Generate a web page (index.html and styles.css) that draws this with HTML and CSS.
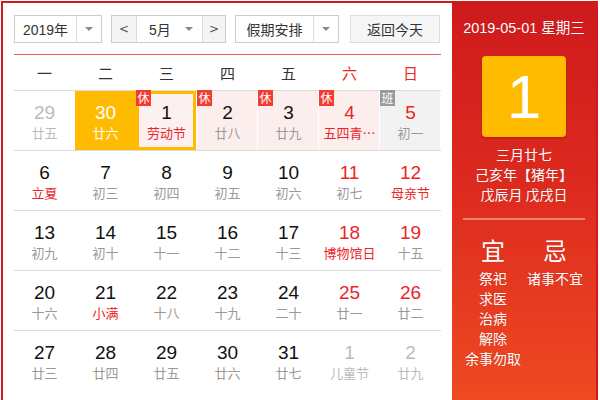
FILE: index.html
```html
<!DOCTYPE html>
<html lang="zh-CN">
<head>
<meta charset="utf-8">
<title>万年历</title>
<link rel="stylesheet" href="styles.css">
</head>
<body>
<div class="cal">
  <div class="main">
    <div class="controls">
      <div class="sel sel-year"><span class="sel-text">2019年</span><span class="sel-arrow"><i class="tri"></i></span></div>
      <div class="month-group">
        <span class="nav">&lt;</span>
        <span class="month"><span class="month-text">5月</span><i class="tri"></i></span>
        <span class="nav nav-next">&gt;</span>
      </div>
      <div class="sel sel-holiday"><span class="sel-text">假期安排</span><span class="sel-arrow"><i class="tri"></i></span></div>
      <div class="btn-today">返回今天</div>
    </div>
    <div class="week">
      <span>一</span><span>二</span><span>三</span><span>四</span><span>五</span><span class="red">六</span><span class="red">日</span>
    </div>
    <div class="grid">
      <div class="cell other"><b>29</b><em>廿五</em></div>
      <div class="cell selected"><b>30</b><em>廿六</em></div>
      <div class="cell holiday today"><span class="frame"></span><span class="badge">休</span><b>1</b><em class="red">劳动节</em></div>
      <div class="cell holiday"><span class="badge">休</span><b>2</b><em>廿八</em></div>
      <div class="cell holiday"><span class="badge">休</span><b>3</b><em>廿九</em></div>
      <div class="cell holiday"><span class="badge">休</span><b class="red">4</b><em class="red">五四青…</em></div>
      <div class="cell work"><span class="badge badge-work">班</span><b class="red">5</b><em>初一</em></div>

      <div class="cell"><b>6</b><em class="red">立夏</em></div>
      <div class="cell"><b>7</b><em>初三</em></div>
      <div class="cell"><b>8</b><em>初四</em></div>
      <div class="cell"><b>9</b><em>初五</em></div>
      <div class="cell"><b>10</b><em>初六</em></div>
      <div class="cell"><b class="red">11</b><em>初七</em></div>
      <div class="cell"><b class="red">12</b><em class="red">母亲节</em></div>

      <div class="cell"><b>13</b><em>初九</em></div>
      <div class="cell"><b>14</b><em>初十</em></div>
      <div class="cell"><b>15</b><em>十一</em></div>
      <div class="cell"><b>16</b><em>十二</em></div>
      <div class="cell"><b>17</b><em>十三</em></div>
      <div class="cell"><b class="red">18</b><em class="red">博物馆日</em></div>
      <div class="cell"><b class="red">19</b><em>十五</em></div>

      <div class="cell"><b>20</b><em>十六</em></div>
      <div class="cell"><b>21</b><em class="red">小满</em></div>
      <div class="cell"><b>22</b><em>十八</em></div>
      <div class="cell"><b>23</b><em>十九</em></div>
      <div class="cell"><b>24</b><em>二十</em></div>
      <div class="cell"><b class="red">25</b><em>廿一</em></div>
      <div class="cell"><b class="red">26</b><em>廿二</em></div>

      <div class="cell"><b>27</b><em>廿三</em></div>
      <div class="cell"><b>28</b><em>廿四</em></div>
      <div class="cell"><b>29</b><em>廿五</em></div>
      <div class="cell"><b>30</b><em>廿六</em></div>
      <div class="cell"><b>31</b><em>廿七</em></div>
      <div class="cell other"><b>1</b><em>儿童节</em></div>
      <div class="cell other"><b>2</b><em>廿九</em></div>
    </div>
  </div>
  <div class="side">
    <div class="side-date">2019-05-01 星期三</div>
    <div class="side-day">1</div>
    <div class="side-lunar">三月廿七</div>
    <div class="side-lunar">己亥年【猪年】</div>
    <div class="side-lunar">戊辰月 戊戌日</div>
    <div class="side-line"></div>
    <div class="yiji">
      <div class="yj-col">
        <div class="yj-title">宜</div>
        <div class="yj-item">祭祀</div>
        <div class="yj-item">求医</div>
        <div class="yj-item">治病</div>
        <div class="yj-item">解除</div>
        <div class="yj-item">余事勿取</div>
      </div>
      <div class="yj-col">
        <div class="yj-title">忌</div>
        <div class="yj-item">诸事不宜</div>
      </div>
    </div>
  </div>
</div>
</body>
</html>
```

FILE: styles.css
```css
* { box-sizing: border-box; }
html, body { margin: 0; padding: 0; background: #fff; }
body {
  font-family: "Liberation Sans", "Noto Sans CJK SC", sans-serif;
  color: #333;
}
.cal {
  margin: 1px 0 0 1px;
  width: 597px;
  height: 410px;
  border: 2px solid #d3181c;
  display: flex;
}
.main {
  width: 449px;
  padding: 12px 0 0 11px;
}
.controls {
  display: flex;
  align-items: stretch;
  height: 28px;
  font-family: "Noto Sans CJK SC", sans-serif;
  font-size: 14px;
  color: #333;
}
.sel {
  display: flex;
  border: 1px solid #ccc;
  background: #fff;
}
.sel-text {
  display: flex;
  align-items: center;
  justify-content: center;
  border-right: 1px solid #ddd;
}
.sel-arrow {
  display: flex;
  align-items: center;
  justify-content: center;
}
.tri {
  display: block;
  width: 0;
  height: 0;
  border-left: 4px solid transparent;
  border-right: 4px solid transparent;
  border-top: 4px solid #888;
}
.sel-year { width: 88px; }
.sel-year .sel-text { width: 62px; font-family: "Liberation Sans", "Noto Sans CJK SC", sans-serif; font-size: 14px; }
.sel-year .sel-arrow { flex: 1; }
.month-group {
  margin-left: 9px;
  width: 115px;
  display: flex;
  border: 1px solid #ccc;
}
.nav {
  width: 25px;
  display: flex;
  align-items: center;
  justify-content: center;
  background: #f4f4f4;
  border-right: 1px solid #ddd;
  font-family: "DejaVu Sans", sans-serif;
  font-size: 12px;
  color: #555;
}
.nav-next {
  width: 23px;
  border-right: 0;
  border-left: 1px solid #ddd;
}
.month {
  flex: 1;
  display: flex;
  align-items: center;
  justify-content: space-between;
  padding: 0 9px 0 12px;
}
.month-text { font-family: "Liberation Sans", "Noto Sans CJK SC", sans-serif; }
.sel-holiday { margin-left: 9px; width: 104px; }
.sel-holiday .sel-text { width: 78px; }
.sel-holiday .sel-arrow { flex: 1; }
.btn-today {
  margin-left: 11px;
  width: 90px;
  display: flex;
  align-items: center;
  justify-content: center;
  background: #f6f6f6;
  border: 1px solid #ddd;
}
.week {
  margin-top: 11px;
  width: 427px;
  height: 36px;
  border-top: 1px solid #f25a5a;
  display: grid;
  grid-template-columns: repeat(7, 61px);
  align-items: center;
  font-family: "Noto Sans CJK SC", sans-serif;
  font-size: 15px;
  color: #333;
}
.week span { text-align: center; line-height: 34px; }
.red { color: #ec2528 !important; }
.grid {
  width: 427px;
  display: grid;
  grid-template-columns: repeat(7, 61px);
  grid-auto-rows: 60px;
}
.cell {
  position: relative;
  border-top: 1px solid #dcdcdc;
  display: flex;
  flex-direction: column;
  align-items: center;
  padding-top: 11px;
}
.cell b {
  position: relative;
  font-weight: normal;
  font-family: "Liberation Sans", sans-serif;
  font-size: 19px;
  line-height: 22px;
  color: #111;
}
.cell em {
  position: relative;
  font-style: normal;
  font-family: "Noto Sans CJK SC", sans-serif;
  font-size: 13px;
  line-height: 18px;
  color: #999;
  white-space: nowrap;
}
.cell.other b, .cell.other em { color: #bbb; }
.cell.selected { background: #ffbb00; }
.cell.selected b, .cell.selected em { color: #fff; }
.cell.holiday::before,
.cell.work::before {
  content: "";
  position: absolute;
  top: 0; bottom: 0; left: 0; right: 1px;
  background: #fdeeee;
}
.cell.work::before { background: #f2f2f2; }
.frame {
  position: absolute;
  top: 0; bottom: 0; left: 0; right: 1px;
  border: 3px solid #ffbb00;
  background: #fdf0f0;
}
.badge {
  position: absolute;
  top: -1px;
  left: 0;
  width: 15px;
  height: 16px;
  background: #f43b2f;
  color: #fff;
  font-family: "Noto Sans CJK SC", sans-serif;
  font-size: 12px;
  line-height: 16px;
  text-align: center;
  z-index: 2;
}
.badge-work { background: #9a9a9a; }
.side {
  width: 144px;
  background: linear-gradient(180deg, #cf1a1c 0%, #dd2a1f 45%, #ef4b22 100%);
  display: flex;
  flex-direction: column;
  align-items: center;
  padding-top: 15px;
  color: #fff;
  font-family: "Noto Sans CJK SC", sans-serif;
  text-shadow: 0 0 1px rgba(120, 0, 0, 0.35);
}
.side-date {
  font-family: "Liberation Sans", "Noto Sans CJK SC", sans-serif;
  font-size: 14.5px;
  line-height: 20px;
}
.side-day {
  margin-top: 18px;
  width: 84px;
  height: 81px;
  border-radius: 4px;
  background: #ffbb00;
  box-shadow: 0 1px 2px rgba(120, 20, 0, 0.4);
  display: flex;
  align-items: center;
  justify-content: center;
  font-family: "Liberation Sans", sans-serif;
  font-size: 62px;
  line-height: 1;
  text-shadow: none;
}
.side-lunar {
  font-size: 14px;
  line-height: 20px;
}
.side-day + .side-lunar { margin-top: 7px; }
.side-line {
  margin-top: 14px;
  width: 122px;
  height: 2px;
  background: rgba(255, 200, 190, 0.55);
}
.yiji {
  margin-top: 15px;
  display: flex;
  width: 124px;
}
.yj-col {
  width: 62px;
  display: flex;
  flex-direction: column;
  align-items: center;
}
.yj-title {
  font-size: 24px;
  line-height: 30px;
  margin-bottom: 3px;
}
.yj-item {
  font-size: 14px;
  line-height: 20px;
  white-space: nowrap;
}
```
